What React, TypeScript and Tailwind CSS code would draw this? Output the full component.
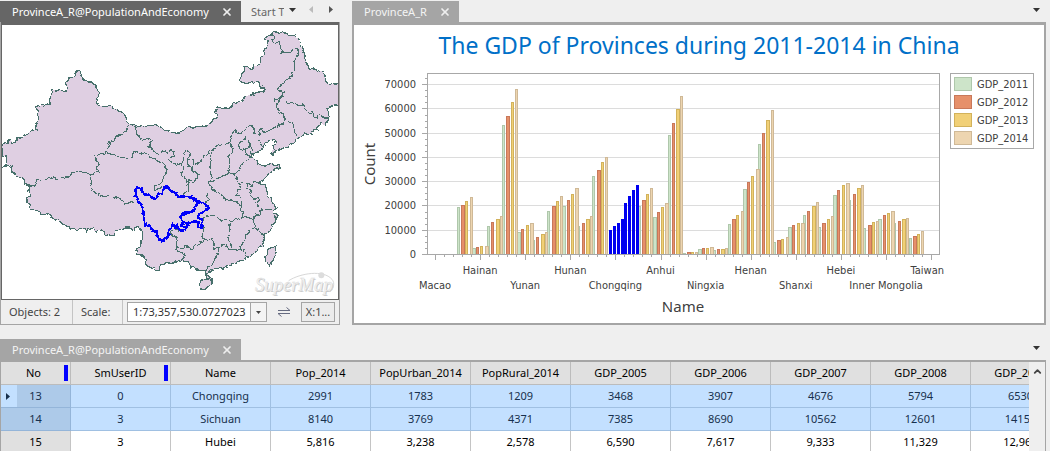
import React from "react";
import { X, ChevronUp } from "lucide-react";

const COUNTRY =
  "M6,434L16,428L25,430L27,422L34,430L44,428L50,414L66,412L78,404L96,394L108,388L110,372L116,360L112,330L104,322L126,314L134,315L138,310L148,314L150,294L156,264L162,270L198,272L202,240L208,234L218,232L224,226L222,218L230,213L240,214L243,226L254,238L266,246L276,246L284,252L288,264L296,272L296,288L290,302L292,314L302,320L336,320L346,328L362,334L372,342L382,364L388,374L410,376L470,376L484,382L492,390L512,394L530,400L544,394L560,384L580,382L600,379L620,378L630,370L636,360L646,354L656,346L648,340L646,332L652,320L668,324L686,324L700,310L722,308L734,290L750,287L760,282L772,276L792,276L792,268L780,256L772,246L762,250L756,244L740,250L722,248L718,242L722,228L732,214L734,200L740,198L752,208L764,198L780,192L782,176L790,164L792,152L800,144L806,124L796,116L800,108L808,102L830,96L850,98L860,100L868,106L884,106L896,116L900,126L904,142L912,156L914,172L920,180L922,198L930,206L950,208L958,214L968,214L978,226L976,242L982,248L990,252L1014,250L1030,250L1030,316L1006,315L994,316L992,322L982,326L984,338L988,348L984,362L976,366L978,378L970,376L964,370L956,378L952,388L942,390L934,402L924,404L914,398L904,408L892,416L880,430L868,434L854,444L836,450L826,456L816,464L812,460L822,450L824,440L818,434L830,428L824,418L806,424L790,438L782,454L762,460L754,470L764,478L774,484L774,494L786,498L800,496L812,488L818,494L830,492L838,494L838,502L826,506L820,514L806,520L800,530L790,538L778,546L784,552L796,556L800,570L804,586L812,592L816,602L826,610L828,626L820,632L816,638L836,644L828,650L828,666L818,674L816,684L804,698L796,704L794,716L786,724L788,736L778,744L766,756L750,768L738,772L732,780L710,786L700,790L690,796L676,800L670,804L644,810L628,814L624,824L630,834L622,836L618,826L618,812L590,810L582,802L572,802L566,794L562,784L540,782L526,786L514,790L500,788L494,794L484,792L478,800L478,812L470,812L466,806L456,806L450,798L440,798L438,780L430,770L424,764L410,764L408,750L420,738L426,724L428,694L414,680L404,684L400,690L388,684L376,684L364,690L350,692L342,704L318,706L312,698L304,690L290,694L280,686L266,688L262,698L256,686L240,686L228,690L210,686L202,678L188,672L176,662L160,656L152,648L140,640L124,644L114,636L104,632L90,624L88,612L80,606L82,594L92,592L92,582L86,572L86,558L74,552L72,540L58,532L50,530L36,514L34,504L24,496L10,500L20,492L20,472L14,466L6,466Z";

const ISLANDS = [
  "M598,854L602,846L612,840L624,838L636,836L636,844L630,852L626,862L614,868L602,868Z",
  "M826,740L814,742L806,750L802,762L796,770L798,786L808,794L808,802L812,788L820,780L828,758Z",
];

const BORDERS =
  "M388,374L382,382L380,396L366,400L358,408L350,408L342,420L328,426L326,442L320,458L300,462L282,468L290,476L290,486L298,494L290,508L298,518L284,518L270,522" +
  "M270,522L258,518L240,514L216,520L210,528L190,532L172,538L160,536L150,528L146,536L136,538L112,538L104,556L86,558" +
  "M270,522L276,534L272,560L280,574L290,582L310,588L340,592L360,596L374,612L390,608L404,604" +
  "M320,458L336,464L350,464L358,472L392,476L398,468L400,454L412,456L418,464L434,458L448,472L470,478L482,488L490,488L498,506L498,522L490,530L488,544L480,552L464,558L466,570L478,564L486,560" +
  "M404,376L410,386L408,400L418,410L424,422L440,416L454,420L450,430L454,436L442,440L456,446L466,460L482,464L486,454L500,456L516,448L522,454L520,468L510,474L508,484L522,488L530,494L550,488L550,460L557,452L568,460L562,480L580,478L576,498L590,490L604,484L610,470L620,460L632,452L642,446L658,436L680,432L692,426" +
  "M530,490L546,498L548,510L544,526L556,534L562,546" +
  "M562,480L566,496L576,504L574,512L592,518L598,524L592,536L580,546L570,542L564,556L566,570L550,580" +
  "M640,450L632,464L634,480L630,500L634,530L628,552" +
  "M692,426L698,446L696,458L686,470L690,490L686,518L662,532L650,536L630,552" +
  "M692,426L692,408L704,390L712,400L736,390L742,380L752,376L762,384L762,400L778,408L776,416L782,430L790,440" +
  "M778,408L780,388L786,384L794,398L814,388L828,380L840,374L850,370L856,358" +
  "M854,354L866,364L876,366L878,384L884,392L886,404L892,416" +
  "M824,298L838,300L830,310L830,324L838,338L848,340L854,354" +
  "M836,298L844,290L854,292L864,306L888,310L894,318L908,314L914,326L926,334L928,342L938,334L942,352L952,352L958,344L972,354L984,354" +
  "M808,102L820,104L822,112L816,122L826,130L838,126L842,142L844,156L854,158L874,156L880,148L888,148L896,164L884,182L884,208L876,216L872,234L860,236L850,250L836,262L838,272L850,276L848,284L840,290L836,298" +
  "M870,230L872,240M848,272L856,278M822,296L826,304" +
  "M716,440L718,428L730,422L736,414L750,430L748,444L732,448L720,446Z" +
  "M752,432L744,444L736,446L736,462L748,468L754,470M752,436L754,450L750,460L760,462" +
  "M752,472L740,478L728,490L720,502L712,518L704,522L710,532L706,540L720,550L732,546L742,554L758,556L762,548L778,546M686,518L704,522" +
  "M628,552L632,564L640,570L656,578L670,594L688,602L704,604L724,616" +
  "M720,552L728,564L712,570L708,586L720,590L724,606L724,616L728,652" +
  "M742,556L740,566L754,570L752,588L762,596L776,590L780,602L768,608L776,620L788,630L802,628L816,630" +
  "M706,660L728,652L744,652L762,660L766,646L780,642L786,628" +
  "M762,660L764,676L772,690L782,702L798,702" +
  "M628,552L638,572L622,580L620,590L630,598L616,606" +
  "M606,662L612,652L636,648L650,652L662,660L684,662L706,660L728,652" +
  "M612,656L604,674L612,684L608,704L604,712L616,722L638,716L642,730L640,744L652,746L664,738L678,734L684,746L694,746" +
  "M690,664L688,680L690,700L684,712L692,728L694,746L720,748L724,732L734,724L738,708L750,690L764,684" +
  "M720,748L730,752L736,764L742,774" +
  "M656,748L652,764L640,780L638,794L626,800L618,812" +
  "M534,692L516,690L512,704L526,708L532,722L528,738L540,746L556,740L576,746L590,734L612,724" +
  "M528,738L532,754L548,760L556,766L546,776L540,784";

const SELECTED =
  "M408,594L406,582L406,570L412,562L424,564L430,580L442,586L452,592L466,594L478,582L488,580L490,566L500,560L508,572L526,576L530,588L550,590L572,592L588,602L602,606L620,614L626,624L618,632L608,636L596,640L594,650L606,660L606,684L598,680L594,666L582,664L566,668L556,690L542,692L528,684L530,676L518,674L508,692L500,714L484,724L476,712L472,698L456,690L448,676L438,680L434,660L430,634L424,614L416,602Z" +
  "M596,606L588,616L580,634L564,640L548,640L544,656L550,666L544,676L556,682L560,668";

const ProvinceMap = () => (
  <svg
    role="img"
    aria-label="Map of provinces"
    className="block h-full w-full"
    viewBox="6 75 1008 822"
    preserveAspectRatio="xMidYMid slice"
    strokeLinejoin="round"
  >
    <filter id="rough" x="0" y="0" width="1" height="1" colorInterpolationFilters="sRGB">
      <feTurbulence type="fractalNoise" baseFrequency="0.07" numOctaves="2" seed="4" />
      <feDisplacementMap in="SourceGraphic" scale="13" xChannelSelector="R" yChannelSelector="G" />
    </filter>
    <g filter="url(#rough)" shapeRendering="crispEdges">
      <rect x="-20" y="50" width="1060" height="880" fill="#fff" />
      <g fill="#dfcfe2" stroke="#47706b" strokeWidth="3.4">
        <path d={COUNTRY} />
        {ISLANDS.map((d) => (
          <path key={d} d={d} />
        ))}
      </g>
      <path d={BORDERS} fill="none" stroke="#47706b" strokeWidth="3.2" />
      <path d={SELECTED} fill="none" stroke="#0000fa" strokeWidth="8" />
    </g>
    <g fontFamily="Liberation Serif, serif" fontStyle="italic" fontSize="56">
      <text x="768" y="877" fill="#c8c8c8">SuperMap</text>
      <text x="765" y="874" fill="#f4f4f4" stroke="#dadada" strokeWidth="1">SuperMap</text>
    </g>
    <path d="M866,842C900,820 970,808 996,838C1006,850 1000,866 990,876" fill="none" stroke="#d8d8d8" strokeWidth="3" />
    <circle cx="964" cy="826" r="9" fill="#dcdcdc" />
  </svg>
);

const SERIES = [
  { name: "GDP_2011", fill: "#cde4c9", edge: "#afc7ab" },
  { name: "GDP_2012", fill: "#e6906a", edge: "#c8785a" },
  { name: "GDP_2013", fill: "#f1d077", edge: "#d2b25b" },
  { name: "GDP_2014", fill: "#edd5b0", edge: "#cfb997" },
];

const HEIGHTS = [
  [47, 49, 53, 57], [6, 7, 8, 8], [28, 32, 35, 38], [129, 138, 152, 165],
  [22, 25, 29, 31], [14, 17, 20, 22], [43, 48, 53, 58], [48, 54, 60, 66],
  [28, 31, 35, 38], [78, 84, 92, 97], [24, 28, 31, 35], [51, 58, 64, 69],
  [48, 54, 60, 66], [37, 42, 47, 51], [119, 131, 145, 158], [1, 2, 2, 2],
  [5, 6, 6, 7], [4, 5, 5, 6], [30, 35, 39, 43], [65, 72, 78, 85],
  [110, 121, 134, 144], [12, 14, 15, 17], [27, 29, 31, 31], [39, 43, 48, 52],
  [27, 31, 35, 38], [59, 64, 69, 71], [54, 60, 66, 69], [26, 29, 32, 33],
  [35, 39, 41, 43], [31, 33, 35, 36], [16, 18, 20, 23],
];
const HIGHLIGHTED = [10, 11];

const CATEGORIES = [
  "Macao", "Hainan", "Yunan", "Hunan", "Chongqing", "Anhui",
  "Ningxia", "Henan", "Shanxi", "Hebei", "Inner Mongolia", "Taiwan",
];
const Y_TICKS = [254, 230, 205, 181, 157, 133, 108, 84];

const GdpChart = () => (
  <svg
    role="img"
    aria-label="The GDP of Provinces during 2011-2014 in China"
    className="block h-full w-full"
    viewBox="354 25 690 298"
    fontFamily="DejaVu Sans Condensed, DejaVu Sans, sans-serif"
    fontSize="11"
    fill="#404040"
  >
    <text x="699" y="54" textAnchor="middle" fontSize="23" fontFamily="Noto Sans, sans-serif" fill="#0070c8">
      The GDP of Provinces during 2011-2014 in China
    </text>
    <g shapeRendering="crispEdges">
      {Y_TICKS.map((y) => (
        <g key={y}>
          <rect x="428" y={y} width="511" height="1" fill="#dcdcdc" />
          <rect x="422" y={y} width="6" height="1" fill="#a8a8a8" />
          {[6, 12, 18].map((d) =>
            y - d > 74 ? <rect key={d} x="425" y={y - d} width="3" height="1" fill="#a8a8a8" /> : null
          )}
        </g>
      ))}
      {SERIES.map((s, si) =>
        HEIGHTS.map((h, gi) => {
          const x = Math.round(457 + gi * 15.05 + si * 4.2);
          const w = (gi + si) % 3 === 1 ? 4 : 3;
          const top = 254 - h[si];
          if (HIGHLIGHTED.includes(gi)) {
            return <rect key={s.name + gi} x={x + 1} y={top} width="3" height={h[si]} fill="#0000f0" />;
          }
          return (
            <g key={s.name + gi}>
              <rect x={x} y={top} width={w} height={h[si]} fill={s.edge} />
              <rect x={x + 1} y={top + 1} width={w - 2} height={Math.max(h[si] - 1, 0)} fill={s.fill} />
            </g>
          );
        })
      )}
      <rect x="427.5" y="73.5" width="512" height="181" fill="none" stroke="#a8a8a8" />
      {Array.from({ length: 56 }, (_, i) => (
        <rect key={i} x={Math.round(435 + i * 9.02)} y="255" width="1" height={i % 5 === 0 ? 5 : 2} fill="#a8a8a8" />
      ))}
      <rect x="950.5" y="73.5" width="83" height="75" fill="#fff" stroke="#a8a8a8" />
      {SERIES.map((s, i) => (
        <rect key={s.name} x="954.5" y={77.5 + i * 18} width="17" height="13" fill={s.fill} stroke={s.edge} />
      ))}
    </g>
    {SERIES.map((s, i) => (
      <text key={s.name} x="977" y={88 + i * 18}>{s.name}</text>
    ))}
    {Y_TICKS.map((y, i) => (
      <text key={y} x="416" y={y + 4} textAnchor="end">{i * 10000}</text>
    ))}
    {CATEGORIES.map((c, i) => (
      <text key={c} x={c === "Taiwan" ? 944 : 435 + i * 45.1} y={i % 2 ? 274 : 289} textAnchor={c === "Taiwan" ? "end" : "middle"}>{c}</text>
    ))}
    <g fontFamily="Noto Sans, sans-serif" fontSize="15" textAnchor="middle">
      <text x="683" y="312">Name</text>
      <text transform="translate(375 164) rotate(-90)">Count</text>
    </g>
  </svg>
);

const Caret = () => (
  <svg className="h-1 w-[7px]" viewBox="0 0 7 4" fill="#333"><path d="M0 0h7L3.5 4z" /></svg>
);

const Tab = ({ label, active = false }: { label: string; active?: boolean }) => (
  <div className={`flex h-[21px] items-center gap-3 pr-2 pl-3 ${active ? "bg-[#666] text-white" : "bg-[#a5a5a5] text-[#f4f4f4]"}`}>
    <button type="button" className="whitespace-nowrap">{label}</button>
    <button type="button" aria-label={`Close ${label}`} className="text-[#eee]">
      <X size={12} strokeWidth={3.5} />
    </button>
  </div>
);

const COLUMNS = ["SmUserID", "Name", "Pop_2014", "PopUrban_2014", "PopRural_2014", "GDP_2005", "GDP_2006", "GDP_2007", "GDP_2008", "GDP_2009"];
const ROWS = [
  { no: 13, selected: true, cells: ["0", "Chongqing", "2991", "1783", "1209", "3468", "3907", "4676", "5794", "6530"] },
  { no: 14, selected: true, cells: ["3", "Sichuan", "8140", "3769", "4371", "7385", "8690", "10562", "12601", "14151"] },
  { no: 15, selected: false, cells: ["3", "Hubei", "5,816", "3,238", "2,578", "6,590", "7,617", "9,333", "11,329", "12,961"] },
];

const KeyMark = () => <span className="absolute top-[3px] right-[2px] h-4 w-1 bg-[#00f]" />;

export default function App() {
  return (
    <div className="flex h-screen flex-col overflow-hidden bg-[#efefef] pt-px pr-1 font-['Noto_Sans',sans-serif] text-[11px] leading-4 text-[#444]">
      <div className="flex h-[324px] shrink-0 gap-3">
        <section className="flex w-[340px] shrink-0 flex-col">
          <header className="flex items-center">
            <Tab label="ProvinceA_R@PopulationAndEconomy" active />
            <button type="button" className="ml-[10px] w-[33px] overflow-hidden text-left whitespace-nowrap text-[#666]">Start Table</button>
            <div className="ml-[5px] flex items-center pb-1">
              <button type="button" aria-label="All tabs" className="flex"><Caret /></button>
              <button type="button" aria-label="Previous tab" className="ml-[13px] flex">
                <svg className="h-[7px] w-1" viewBox="0 0 4 7" fill="#bbb"><path d="M4 0v7L0 3.5z" /></svg>
              </button>
              <button type="button" aria-label="Next tab" className="ml-4 flex">
                <svg className="h-[7px] w-1" viewBox="0 0 4 7" fill="#555"><path d="M0 0v7L4 3.5z" /></svg>
              </button>
            </div>
          </header>
          <div className="flex min-h-0 flex-1 flex-col border border-t-0 border-[#a5a5a5]">
            <div className="min-h-0 flex-1 border border-t-[3px] border-[#666] bg-white">
              <ProvinceMap />
            </div>
            <div className="flex h-6 items-center">
              <span className="flex h-full w-[72px] items-center border-r border-[#c4c4c4] pl-2">Objects: 2</span>
              <label htmlFor="scale" className="flex h-full w-[50px] items-center border-r border-[#c4c4c4] pl-2">Scale:</label>
              <div className="relative ml-1 flex h-5 w-[140px] border border-[#a5a5a5] bg-white">
                <select id="scale" className="h-full w-full appearance-none bg-transparent pl-[5px] text-[#333] outline-none">
                  <option>1:73,357,530.0727023</option>
                </select>
                <span className="pointer-events-none absolute inset-y-0 right-0 flex w-4 items-center justify-center border-l border-[#a5a5a5] bg-[#f4f4f4]">
                  <svg className="h-[3px] w-[5px]" viewBox="0 0 5 3" fill="#444"><path d="M0 0h5L2.5 3z" /></svg>
                </span>
              </div>
              <button type="button" aria-label="Swap" className="ml-[11px] flex">
                <svg className="h-[10px] w-3" viewBox="0 0 12 10" fill="none" stroke="#666b80">
                  <path d="M0 3.5h12L8.5 .5M12 6.5H0l3.5 3" />
                </svg>
              </button>
              <button type="button" className="ml-[11px] h-5 w-[34px] border border-[#a5a5a5] bg-[#ececec]">X:1...</button>
            </div>
          </div>
        </section>

        <section className="flex min-w-0 flex-1 flex-col">
          <header className="flex items-center justify-between">
            <Tab label="ProvinceA_R" />
            <button type="button" aria-label="All tabs" className="mr-[6px] mb-1 flex"><Caret /></button>
          </header>
          <div className="min-h-0 flex-1 border-2 border-t-[3px] border-[#a5a5a5] bg-white">
            <GdpChart />
          </div>
        </section>
      </div>

      <section className="mt-[14px] flex min-h-0 flex-1 flex-col">
        <header className="flex items-center justify-between">
          <Tab label="ProvinceA_R@PopulationAndEconomy" />
          <button type="button" aria-label="All tabs" className="mr-[6px] mb-1 flex"><Caret /></button>
        </header>
        <div className="flex min-h-0 flex-1 border-x border-t-2 border-[#a5a5a5]">
          <div className="min-w-0 flex-1 overflow-hidden">
            <table className="w-[1070px] table-fixed border-separate border-spacing-0 text-center text-black">
              <thead>
                <tr className="h-[23px] bg-[#e0e0e0]">
                  <th scope="col" className="relative w-[70px] border-r border-b border-[#bcbcbc] p-0 pr-1 font-normal">No<KeyMark /></th>
                  {COLUMNS.map((c, i) => (
                    <th key={c} scope="col" className="relative border-r border-b border-[#bcbcbc] p-0 font-normal">
                      {c}
                      {i === 0 && <KeyMark />}
                    </th>
                  ))}
                </tr>
              </thead>
              <tbody>
                {ROWS.map((r) => (
                  <tr key={r.no} className={r.selected ? "h-[23px] bg-[#c3e0ff] text-[#17304d]" : "h-[23px] bg-white"}>
                    <th scope="row" className={`relative border-r border-b p-0 font-normal ${r.selected ? "border-[#94b5d9] bg-[#adcae9]" : "border-[#c4c4c4] bg-[#e0e0e0]"}`}>
                      {r.no === 13 && (
                        <span className="absolute inset-y-0 left-0 flex w-4 items-center bg-[#c3e0ff] pl-[5px]">
                          <svg className="h-[7px] w-1" viewBox="0 0 4 7" fill="#17304d"><path d="M0 0v7L4 3.5z" /></svg>
                        </span>
                      )}
                      {r.no}
                    </th>
                    {r.cells.map((c, i) => (
                      <td key={COLUMNS[i]} className={`border-r border-b p-0 ${r.selected ? "border-[#a0c0e2]" : "border-[#c4c4c4]"}`}>{c}</td>
                    ))}
                  </tr>
                ))}
              </tbody>
            </table>
          </div>
          <div className="flex w-4 justify-center pt-[3px]">
            <button type="button" aria-label="Scroll up" className="flex h-3 items-center">
              <ChevronUp size={11} strokeWidth={4} />
            </button>
          </div>
        </div>
      </section>
    </div>
  );
}
